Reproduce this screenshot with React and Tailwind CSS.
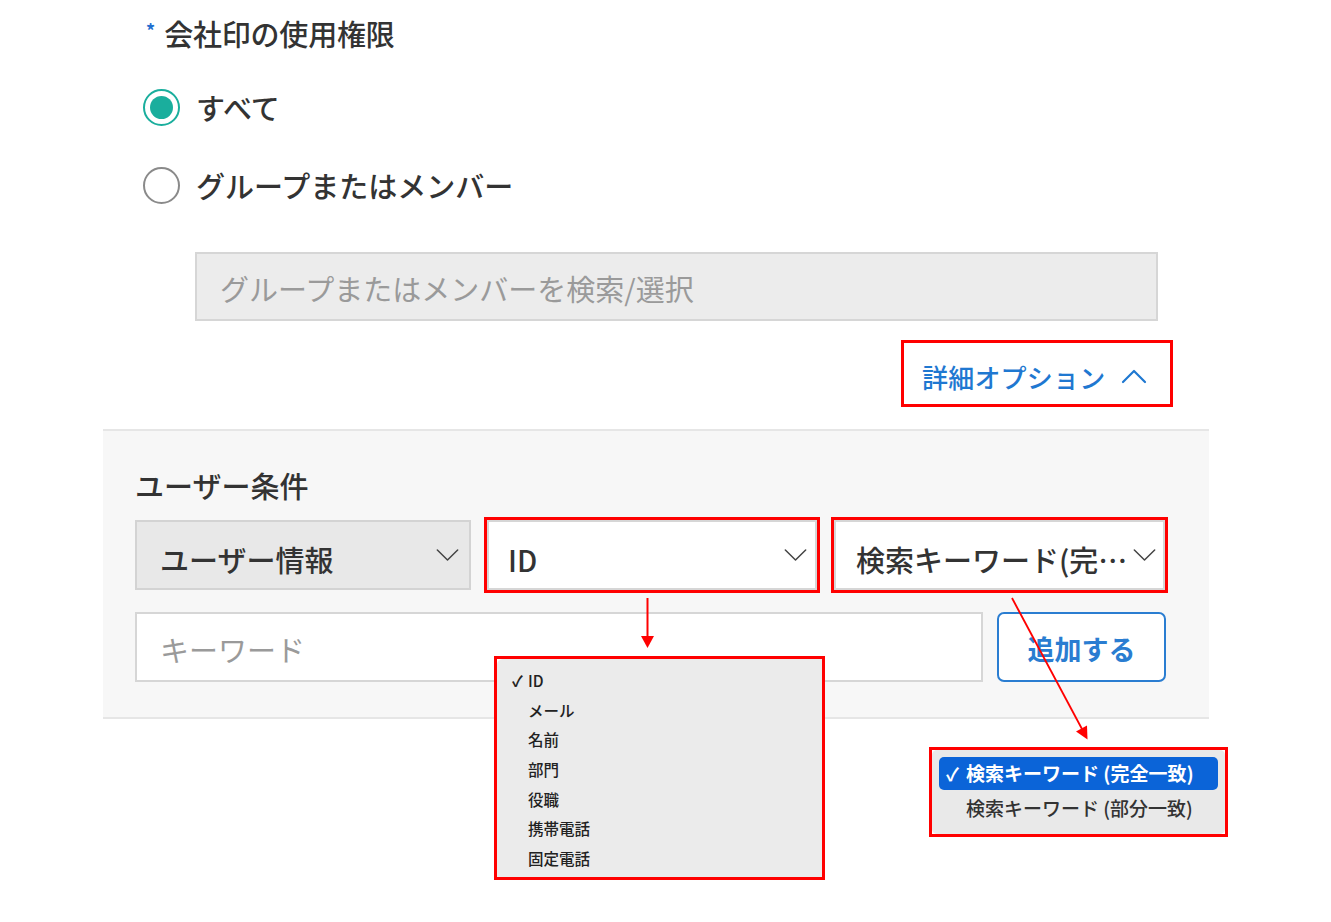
import React from "react";

const FONT = { fontFamily: '"Noto Sans CJK JP", "Noto Sans", sans-serif' };

function ChevronDown({ className }) {
  return (
    <svg className={className} viewBox="0 0 24 13" fill="none">
      <polyline points="1,1 12,12 23,1" stroke="#444" strokeWidth="1.6" strokeLinejoin="round" strokeLinecap="round" />
    </svg>
  );
}

function Radio({ checked }) {
  if (checked) {
    return (
      <div className="w-[37px] h-[37px] rounded-full border-[2px] border-[#1aae9d] bg-white flex items-center justify-center shrink-0">
        <div className="w-[23px] h-[23px] rounded-full bg-[#1aae9d]" />
      </div>
    );
  }
  return <div className="w-[37px] h-[37px] rounded-full border-[2px] border-[#8a8a8a] bg-white shrink-0" />;
}

export default function App() {
  return (
    <div className="relative w-[1331px] h-[922px] bg-white overflow-hidden text-[#333]" style={FONT}>
      {/* top block */}
      <div className="pl-[143px] pt-[13px] w-[1173px]">
        <div className="flex items-start h-[40px]">
          <span className="ml-[3px] mt-[8px] text-[18px] leading-[18px] text-[#1f6fd0] font-bold">*</span>
          <span className="ml-[9px] text-[29px] leading-[40px] font-medium tracking-[-0.2px]">会社印の使用権限</span>
        </div>

        <div className="mt-[36px] flex items-center gap-[16px] h-[37px]">
          <Radio checked />
          <span className="text-[29px] leading-[37px] font-medium">すべて</span>
        </div>

        <div className="mt-[41px] flex items-center gap-[16px] h-[37px]">
          <Radio />
          <span className="text-[29px] leading-[37px] font-medium">グループまたはメンバー</span>
        </div>

        <div className="mt-[48px] ml-[52px] w-[963px] h-[69px] bg-[#ececec] border-[2px] border-[#d6d6d6] flex items-center pl-[23px]">
          <span className="text-[29px] text-[#9a9a9a] pt-[4px]">グループまたはメンバーを検索/選択</span>
        </div>

        <div className="mt-[19px] flex justify-end">
          <div className="w-[272px] h-[67px] border-[3px] border-[#ff0000] flex items-center pl-[18px] pt-[6px]">
            <span className="text-[26px] font-medium text-[#1f78d1] tracking-[0.2px]">詳細オプション</span>
            <svg className="ml-[16px] w-[26px] h-[15px]" viewBox="0 0 26 15" fill="none">
              <polyline points="2,13 13,2 24,13" stroke="#1f78d1" strokeWidth="2.2" strokeLinejoin="round" strokeLinecap="round" />
            </svg>
          </div>
        </div>
      </div>

      {/* user conditions section */}
      <div className="mt-[22px] ml-[103px] w-[1106px] bg-[#f7f7f7] border-t-[2px] border-b-[2px] border-[#e6e6e6] pl-[32px] pt-[34px] pb-[35px]">
        <div className="text-[29px] leading-[40px] font-medium">ユーザー条件</div>

        <div className="mt-[15px] flex items-center">
          <div className="w-[336px] h-[70px] bg-[#e8e8e8] border-[2px] border-[#d3d3d3] flex items-center justify-between pl-[23px] pr-[10px]">
            <span className="text-[29px] font-medium pt-[9px]">ユーザー情報</span>
            <ChevronDown className="w-[23px] h-[12px]" />
          </div>
          <div className="ml-[16px] w-[330px] h-[70px] bg-white border-[2px] border-[#d6d6d6] outline-[3px] outline-solid outline-[#ff0000] flex items-center justify-between pl-[19px] pr-[8px]">
            <span className="text-[29px] font-medium pt-[10px]">ID</span>
            <ChevronDown className="w-[23px] h-[12px]" />
          </div>
          <div className="ml-[17px] w-[331px] h-[70px] bg-white border-[2px] border-[#d6d6d6] outline-[3px] outline-solid outline-[#ff0000] flex items-center justify-between pl-[20px] pr-[7px]">
            <span className="text-[29px] font-medium whitespace-nowrap pt-[9px]">検索キーワード(完…</span>
            <ChevronDown className="w-[23px] h-[12px]" />
          </div>
        </div>

        <div className="mt-[22px] flex items-center">
          <div className="w-[848px] h-[70px] bg-white border-[2px] border-[#d6d6d6] flex items-center pl-[23px]">
            <span className="text-[29px] text-[#9a9a9a] pt-[5px]">キーワード</span>
          </div>
          <div className="ml-[14px] w-[169px] h-[70px] bg-white border-[2px] border-[#2a7dd1] rounded-[7px] flex items-center justify-center">
            <span className="text-[27px] font-bold text-[#2a7dd1] pt-[4px]">追加する</span>
          </div>
        </div>
      </div>

      {/* ID dropdown overlay */}
      <div className="absolute left-[494px] top-[656px] w-[331px] h-[224px] border-[3px] border-[#ff0000] bg-white">
        <div className="w-full h-full bg-[#ebebeb] rounded-tl-[6px] pt-[7px] flex flex-col">
          {["ID", "メール", "名前", "部門", "役職", "携帯電話", "固定電話"].map((t, i) => (
            <div key={t} className="h-[29.6px] flex items-center text-[15.5px] text-[#222] font-medium">
              <span className="w-[31px] pl-[15px] text-[15px] font-bold">{i === 0 ? "✓" : ""}</span>
              <span>{t}</span>
            </div>
          ))}
        </div>
      </div>

      {/* keyword match dropdown overlay */}
      <div className="absolute left-[929px] top-[747px] w-[299px] h-[90px] border-[3px] border-[#ff0000] bg-white">
        <div className="w-full h-full bg-[#e9e9e9] rounded-[5px] px-[7px] pt-[7px]">
          <div className="h-[33px] rounded-[5px] bg-[#0b64d8] flex items-center text-white text-[19px] font-bold">
            <span className="w-[27px] pl-[7px] text-[18px]">✓</span>
            <span>検索キーワード (完全一致)</span>
          </div>
          <div className="h-[37px] flex items-center text-[#333] text-[19px] font-medium">
            <span className="w-[27px]" />
            <span>検索キーワード (部分一致)</span>
          </div>
        </div>
      </div>

      {/* annotation arrows */}
      <svg className="absolute left-0 top-0 w-[1331px] h-[922px] pointer-events-none" viewBox="0 0 1331 922">
        <line x1="647.5" y1="598" x2="647.5" y2="639" stroke="#ff0000" strokeWidth="2" />
        <polygon points="641,636 654,636 647.5,648" fill="#ff0000" />
        <line x1="1012" y1="598" x2="1082" y2="729" stroke="#ff0000" strokeWidth="1.8" />
        <polygon points="1076,731.5 1087,725.5 1087.5,739.5" fill="#ff0000" />
      </svg>
    </div>
  );
}
